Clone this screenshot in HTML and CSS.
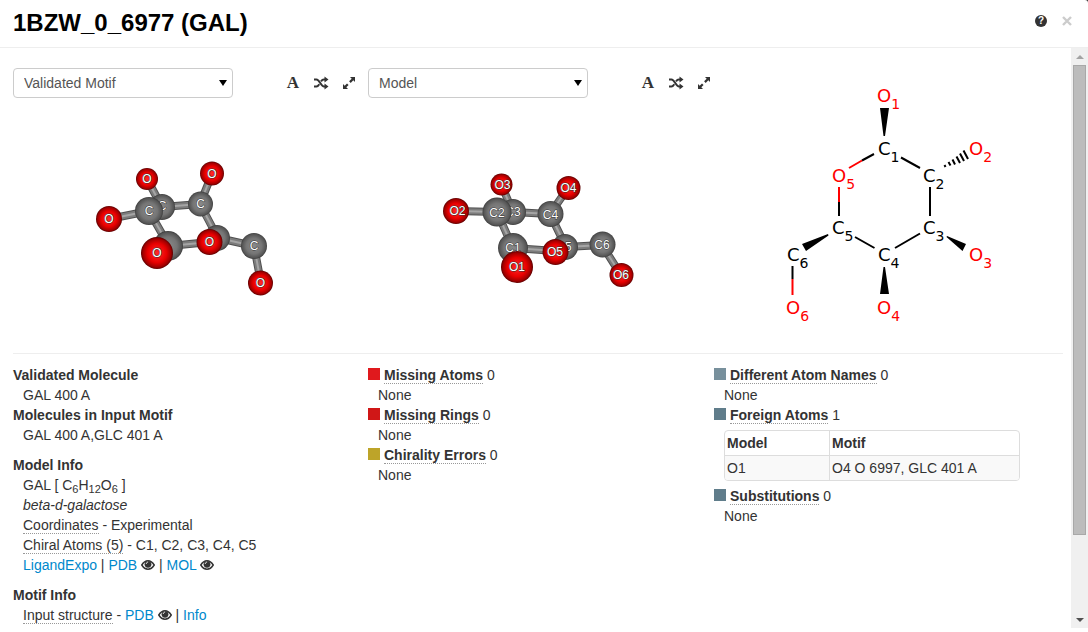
FILE: index.html
```html
<!DOCTYPE html>
<html lang="en">
<head>
  <meta charset="UTF-8" />
  <meta name="viewport" content="width=device-width, initial-scale=1.0"/>
  <title>1BZW_0_6977 (GAL)</title>
  <link rel="stylesheet" href="styles.css">
</head>
<body>

<!-- Shared icons and gradients -->
<svg class="defs" aria-hidden="true">
  <defs>
    <radialGradient id="carbon">
      <stop offset="0" stop-color="#8a8a8a"/>
      <stop offset="0.6" stop-color="#757575"/>
      <stop offset="0.9" stop-color="#555"/>
      <stop offset="1" stop-color="#3c3c3c"/>
    </radialGradient>
    <radialGradient id="oxygen">
      <stop offset="0" stop-color="#ff2a2a"/>
      <stop offset="0.6" stop-color="#e80000"/>
      <stop offset="0.88" stop-color="#a00000"/>
      <stop offset="1" stop-color="#5c0000"/>
    </radialGradient>
    <symbol id="icon-shuffle" viewBox="0 0 16 14">
      <path d="M1 3.5h2.5c3 0 4.500 7 7.500 7h1.500M1 10.500h2.500c1.200 0 2-1 2.800-2.300M8 5.400c.8-1.100 1.700-1.900 3-1.900h1.500" fill="none" stroke="#333" stroke-width="2"/>
      <path d="M11.500 .5l4 3-4 3zM11.500 7.500l4 3-4 3z" fill="#333"/>
    </symbol>
    <symbol id="icon-expand" viewBox="0 0 14 14">
      <path d="M8 1h5v5l-1.700-1.700-2.600 2.600-1.600-1.600 2.600-2.600zM6 13H1V8l1.700 1.700 2.300-2.300 1.600 1.600-2.300 2.300z" fill="#333"/>
    </symbol>
    <symbol id="icon-eye" viewBox="0 0 14 12">
      <path d="M.8 6C2.500 3.200 4.600 1.800 7 1.800s4.500 1.400 6.200 4.200c-1.700 2.800-3.800 4.200-6.200 4.200S2.500 8.800 .8 6z" fill="#fff" stroke="#333" stroke-width="1.500"/>
      <circle cx="7" cy="5.300" r="3.400" fill="#333"/>
      <path d="M5.300 5c0-1.200.7-1.900 1.800-1.900" fill="none" stroke="#fff" stroke-width="0.9"/>
    </symbol>
  </defs>
</svg>

<div class="modal">
  <header class="modal-header">
    <h3>1BZW_0_6977 (GAL)</h3>
    <button class="help" aria-label="Help">?</button>
    <button class="close" aria-label="Close">
      <svg width="10" height="10" viewBox="0 0 10 10"><path d="M1 1l8 8M9 1l-8 8" stroke="#ccc" stroke-width="2.400"/></svg>
    </button>
  </header>

  <div class="modal-body">
    <div class="content">

      <div class="viewers">
        <section class="viewer">
          <div class="toolbar">
            <div class="select">
              <select aria-label="Left structure"><option>Validated Motif</option><option>Model</option></select>
            </div>
            <div class="tools">
              <button class="letter" aria-label="Toggle labels">A</button>
              <button aria-label="Toggle display mode"><svg width="16" height="14"><use href="#icon-shuffle"/></svg></button>
              <button aria-label="Full screen"><svg width="14" height="14"><use href="#icon-expand"/></svg></button>
            </div>
          </div>
          <svg class="molecule" viewBox="13 98 350 245" role="img" aria-label="Validated motif">
            <g class="bonds dark"><path id="left-bonds" d="M147 179L162 207L200 204L212 174M109 219L149 211L169 246L210 242M200 204L218 238L254 246L261 283"/></g>
            <g class="bonds mid"><use href="#left-bonds"/></g>
            <g class="bonds light"><use href="#left-bonds"/></g>
            <g class="atoms">
              <circle class="o" cx="147" cy="179" r="11"/><text x="147" y="183">O</text>
              <circle class="c" cx="162" cy="207" r="13"/><text x="162" y="210">C</text>
              <circle class="c" cx="200.500" cy="204" r="12.500"/><text x="200.500" y="208">C</text>
              <circle class="o" cx="212" cy="173.500" r="12"/><text x="212" y="178">O</text>
              <circle class="o" cx="109" cy="219" r="13"/><text x="109" y="223">O</text>
              <circle class="c" cx="149" cy="211" r="14"/><text x="149" y="215">C</text>
              <circle class="c" cx="217" cy="238" r="13"/>
              <circle class="c" cx="168" cy="246" r="15"/>
              <circle class="o" cx="209.500" cy="242" r="13"/><text x="209.500" y="246">O</text>
              <circle class="c" cx="254" cy="246" r="13"/><text x="254" y="250">C</text>
              <circle class="o" cx="260.500" cy="283" r="12.500"/><text x="260.500" y="287">O</text>
              <circle class="o" cx="157" cy="253" r="16"/><text x="157" y="257">O</text>
            </g>
          </svg>
        </section>

        <section class="viewer">
          <div class="toolbar">
            <div class="select">
              <select aria-label="Right structure"><option>Model</option><option>Validated Motif</option></select>
            </div>
            <div class="tools">
              <button class="letter" aria-label="Toggle labels">A</button>
              <button aria-label="Toggle display mode"><svg width="16" height="14"><use href="#icon-shuffle"/></svg></button>
              <button aria-label="Full screen"><svg width="14" height="14"><use href="#icon-expand"/></svg></button>
            </div>
          </div>
          <svg class="molecule" viewBox="368 98 350 245" role="img" aria-label="Model">
            <g class="bonds dark"><path id="right-bonds" d="M501 184L513 212L550 214L568 188M456 211L497 212L513 248L556 251M550 214L566 247L602 245L621 275"/></g>
            <g class="bonds mid"><use href="#right-bonds"/></g>
            <g class="bonds light"><use href="#right-bonds"/></g>
            <g class="atoms">
              <circle class="o" cx="501.500" cy="184.500" r="11"/><text x="502.500" y="189">O3</text>
              <circle class="c" cx="513" cy="212" r="13"/><text x="513" y="216">C3</text>
              <circle class="c" cx="550.500" cy="214" r="13"/><text x="550.500" y="219">C4</text>
              <circle class="o" cx="568.500" cy="188" r="12"/><text x="568.500" y="192">O4</text>
              <circle class="o" cx="456" cy="211" r="13"/><text x="457.500" y="215">O2</text>
              <circle class="c" cx="497" cy="212" r="14.500"/><text x="497" y="217">C2</text>
              <circle class="c" cx="565" cy="247" r="13"/><text x="564" y="251">C5</text>
              <circle class="c" cx="513" cy="248" r="15"/><text x="513" y="252">C1</text>
              <circle class="o" cx="555.500" cy="252" r="13"/><text x="555" y="256">O5</text>
              <circle class="c" cx="602.500" cy="244.500" r="13"/><text x="602" y="249">C6</text>
              <circle class="o" cx="621.500" cy="275" r="12"/><text x="621" y="279">O6</text>
              <circle class="o" cx="517" cy="267" r="16"/><text x="517" y="271">O1</text>
            </g>
          </svg>
        </section>

        <section class="diagram">
          <svg viewBox="723 68 340 275" role="img" aria-label="Structural formula">
            <path class="wedge" d="M880 108h9l-4 28h-1.500zM883.500 267h1.500l4 27h-9zM802 244l26-10 .5 1.500L806 251zM947 236l19 8-3.500 7-16-14z"/>
            <path class="line" d="M901 157.500L920 168M930 187V216M920 233.500L895 248M855 237L874.500 248M839 216V202M862 160.500L874 154M792.500 266V279"/>
            <path class="line red" d="M839 202V187M849 168L862 160.500M792.500 279V295"/>
            <path class="hash" d="M944.500 165l1 2M948.500 162l2 3.500M952.500 159.500l2.500 5M956.500 156.500l3.500 6.500M960 153.500l4 7.500M963.500 150.500l4.500 8.500"/>
            <g class="names">
              <text class="red" x="877" y="102">O<tspan dy="7">1</tspan></text>
              <text x="878" y="155">C<tspan dy="7">1</tspan></text>
              <text class="red" x="969" y="155">O<tspan dy="7">2</tspan></text>
              <text x="923" y="182">C<tspan dy="7">2</tspan></text>
              <text class="red" x="832" y="182">O<tspan dy="7">5</tspan></text>
              <text x="832" y="234">C<tspan dy="7">5</tspan></text>
              <text x="923" y="234">C<tspan dy="7">3</tspan></text>
              <text x="878" y="261">C<tspan dy="7">4</tspan></text>
              <text class="red" x="969" y="261">O<tspan dy="7">3</tspan></text>
              <text x="787" y="261">C<tspan dy="7">6</tspan></text>
              <text class="red" x="877" y="314">O<tspan dy="7">4</tspan></text>
              <text class="red" x="786" y="314">O<tspan dy="7">6</tspan></text>
            </g>
          </svg>
        </section>
      </div>

      <div class="details">
        <div>
          <h4>Validated Molecule</h4>
          <p>GAL 400 A</p>
          <h4>Molecules in Input Motif</h4>
          <p>GAL 400 A,GLC 401 A</p>

          <div class="group">
            <h4>Model Info</h4>
            <p>GAL [ C<sub>6</sub>H<sub>12</sub>O<sub>6</sub> ]</p>
            <p><i>beta-d-galactose</i></p>
            <p><span class="hint">Coordinates</span> - Experimental</p>
            <p><span class="hint">Chiral Atoms (5)</span> - C1, C2, C3, C4, C5</p>
            <p><a href="#">LigandExpo</a> | <a href="#">PDB</a> <a href="#" aria-label="View PDB"><svg class="eye"><use href="#icon-eye"/></svg></a> | <a href="#">MOL</a> <a href="#" aria-label="View MOL"><svg class="eye"><use href="#icon-eye"/></svg></a></p>
          </div>

          <div class="group">
            <h4>Motif Info</h4>
            <p><span class="hint">Input structure</span> - <a href="#">PDB</a> <a href="#" aria-label="View motif"><svg class="eye"><use href="#icon-eye"/></svg></a> | <a href="#">Info</a></p>
          </div>
        </div>

        <div>
          <div><span class="swatch missing-atoms"></span><strong class="hint">Missing Atoms</strong> 0</div>
          <p>None</p>
          <div><span class="swatch missing-rings"></span><strong class="hint">Missing Rings</strong> 0</div>
          <p>None</p>
          <div><span class="swatch chirality"></span><strong class="hint">Chirality Errors</strong> 0</div>
          <p>None</p>
        </div>

        <div>
          <div><span class="swatch names-differ"></span><strong class="hint">Different Atom Names</strong> 0</div>
          <p>None</p>
          <div><span class="swatch foreign"></span><strong class="hint">Foreign Atoms</strong> 1</div>
          <table>
            <thead><tr><th>Model</th><th>Motif</th></tr></thead>
            <tbody><tr><td>O1</td><td>O4 O 6997, GLC 401 A</td></tr></tbody>
          </table>
          <div><span class="swatch foreign"></span><strong class="hint">Substitutions</strong> 0</div>
          <p>None</p>
        </div>
      </div>
    </div>

    <div class="scrollbar" aria-hidden="true">
      <span class="arrow up"></span>
      <div class="track"><div class="thumb"></div></div>
      <span class="arrow down"></span>
    </div>
  </div>
</div>

</body>
</html>
```

FILE: styles.css
```css
* {
  box-sizing: border-box;
}
body {
  margin: 0;
  background-color: #333;
  color: #333;
  font-family: "Liberation Sans", Arial, sans-serif;
  font-size: 14px;
  line-height: 20px;
}
.defs {
  position: absolute;
  width: 0;
  height: 0;
}
.modal {
  display: flex;
  flex-direction: column;
  height: 100vh;
  padding-bottom: 4px;
  background-color: #fff;
  border-top-right-radius: 3px;
  overflow: hidden;
}

/* header */
.modal-header {
  display: flex;
  align-items: center;
  height: 48px;
  flex: none;
  padding: 0 16px 6px 13px;
  border-bottom: 1px solid #eee;
}
.modal-header h3 {
  flex: 1;
  margin: 0;
  padding-top: 4px;
  color: #000;
  font-size: 24px;
  line-height: 30px;
}
button {
  padding: 0;
  border: none;
  background: none;
  color: #333;
  cursor: pointer;
}
.help {
  width: 12px;
  height: 12px;
  border-radius: 50%;
  background-color: #333;
  color: #fff;
  font: bold 10px/12px "Liberation Sans", Arial, sans-serif;
}
.close {
  display: flex;
  margin-left: 15px;
}

/* body */
.modal-body {
  display: flex;
  flex: 1;
  min-height: 0;
}
.content {
  flex: 1;
  min-width: 0;
  padding: 20px 8px 0 13px;
  overflow: hidden;
}
.viewers {
  display: grid;
  grid-template-columns: 355fr 355fr 340fr;
  padding-bottom: 10px;
  border-bottom: 1px solid #eee;
}
.viewer {
  padding-right: 5px;
}
.viewers svg {
  display: block;
}
.molecule,
.diagram svg {
  width: 100%;
}
.toolbar {
  display: flex;
  justify-content: space-between;
}
.select {
  position: relative;
  width: 220px;
}
.select::after {
  content: "";
  position: absolute;
  top: 12px;
  right: 6px;
  border: 4px solid transparent;
  border-top: 6px solid #000;
  border-bottom: none;
  pointer-events: none;
}
select {
  appearance: none;
  display: block;
  width: 100%;
  height: 30px;
  padding: 0 10px;
  border: 1px solid #ccc;
  border-radius: 4px;
  background-color: #fff;
  color: #555;
  font: inherit;
}
.tools {
  display: flex;
}
.tools button {
  display: flex;
  align-items: center;
  justify-content: center;
  width: 28px;
}
.tools .letter {
  font: bold 17px/30px "Liberation Serif", serif;
}

/* molecules */
.bonds {
  fill: none;
  stroke-linejoin: round;
}
.dark {
  stroke: #505050;
  stroke-width: 8;
}
.mid {
  stroke: #7c7c7c;
  stroke-width: 6;
}
.light {
  stroke: #a5a5a5;
  stroke-width: 2;
}
.atoms .c {
  fill: url(#carbon);
}
.atoms .o {
  fill: url(#oxygen);
}
.atoms text {
  fill: #fff;
  stroke: #333;
  stroke-width: 1px;
  paint-order: stroke;
  font-size: 12px;
  text-anchor: middle;
}
.line,
.hash {
  fill: none;
  stroke: #000;
  stroke-width: 2;
}
.line.red {
  stroke: #f00;
}
.names {
  font-family: "DejaVu Sans", sans-serif;
  font-size: 18px;
}
.names tspan {
  font-size: 14px;
}
.names .red {
  fill: #f00;
}

/* details */
.details {
  display: grid;
  grid-template-columns: 355fr 346fr 349fr;
  padding-top: 11px;
}
.details h4,
.details p {
  margin: 0;
  font-size: 14px;
}
.details p {
  padding-left: 10px;
}
.group {
  margin-top: 10px;
}
sub {
  position: relative;
  bottom: -3px;
  font-size: 11px;
  line-height: 0;
  vertical-align: baseline;
}
a {
  color: #08c;
  text-decoration: none;
}
.hint {
  border-bottom: 1px dotted #999;
}
.eye {
  width: 14px;
  height: 12px;
  vertical-align: -1px;
}
.swatch {
  display: inline-block;
  width: 12px;
  height: 12px;
  margin-right: 4px;
}
.missing-atoms {
  background-color: #e0191d;
}
.missing-rings {
  background-color: #d01717;
}
.chirality {
  background-color: #bda429;
}
.names-differ {
  background-color: #78909c;
}
.foreign {
  background-color: #607d8b;
}
table {
  width: 296px;
  margin: 5px 0 5px 10px;
  border: 1px solid #ddd;
  border-radius: 4px;
  border-collapse: separate;
  border-spacing: 0;
  overflow: hidden;
}
th,
td {
  padding: 2px;
  text-align: left;
}
th:first-child {
  width: 104px;
}
th + th,
td + td {
  border-left: 1px solid #ddd;
}
td {
  border-top: 1px solid #ddd;
  background-color: #f9f9f9;
}

/* scrollbar */
.scrollbar {
  display: flex;
  flex-direction: column;
  width: 17px;
  background-color: #f0f0f0;
}
.track {
  flex: 1;
  padding: 0 2px;
}
.thumb {
  height: 86%;
  border: 1px solid #a8a8a8;
  background-color: #bcbcbc;
}
.arrow {
  display: flex;
  align-items: center;
  justify-content: center;
  height: 17px;
}
.arrow::before {
  content: "";
  border: 4px solid transparent;
}
.up::before {
  border-top: none;
  border-bottom-color: #a3a3a3;
}
.down::before {
  border-bottom: none;
  border-top-color: #505050;
}
```
